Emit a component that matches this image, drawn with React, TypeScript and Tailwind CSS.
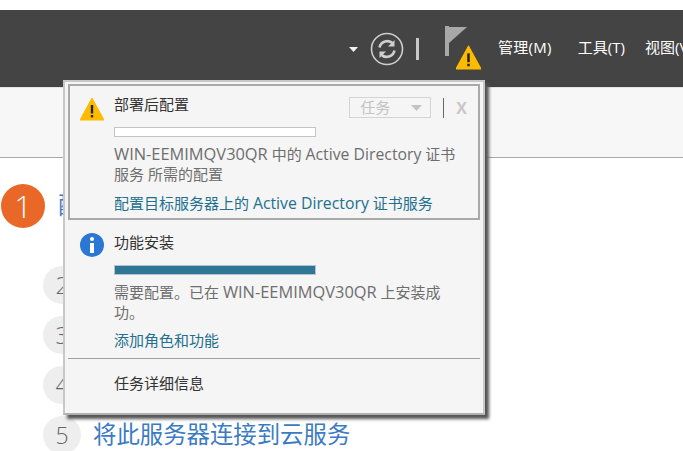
const cjk = "font-['Open_Sans','Noto_Sans_CJK_SC',sans-serif]";

const En = ({ children }: { children: string }) => <span className="text-[15.8px]">{children}</span>;
const Host = () => <span className="text-[16.4px]">WIN-EEMIMQV30QR</span>;

const WarnIcon = ({ size }: { size: number }) => (
  <svg width={size} height={size} viewBox="0 0 24 24">
    <path d="M12 1 L24 23 H0 Z" fill="#fdbb00" stroke="#fdbb00" strokeLinejoin="round" />
    <rect x="10.8" y="8" width="2.4" height="8.5" fill="#222" />
    <rect x="10.8" y="18" width="2.4" height="2.4" fill="#222" />
  </svg>
);

const Step = ({ n, text }: { n: number; text?: string }) => (
  <div className="flex items-center h-[50px]">
    <div className="w-[38px] h-[38px] rounded-full bg-[#eeeeee] flex items-center justify-center text-[23px] leading-none text-[#666] font-light shrink-0">
      {n}
    </div>
    {text && <div className="ml-[12px] text-[23.4px] leading-none text-[#3b7bc4] whitespace-nowrap">{text}</div>}
  </div>
);

const Panel = () => (
  <div className="absolute left-[63px] top-[80px] w-[422px] h-[335px] bg-[#f5f5f5] border-2 border-[#c8c8c8] border-b-[#b0b0b0] shadow-[4px_4px_3px_#555] px-[3px] pt-[2px]">
    <div className="border-2 border-[#a9a9a9] h-[136px] pl-[44px] pr-[12px] relative">
      <div className="absolute left-[10px] top-[11px]">
        <WarnIcon size={24} />
      </div>
      <div className="flex items-center justify-between h-[36px]">
        <span className="text-[15px] text-[#333]">部署后配置</span>
        <div className="flex items-center mt-[7px] mr-[-1px]">
          <div className="w-[82px] h-[21px] border border-[#d4d4d4] flex items-center pl-[10px] text-[15px] text-[#c4c4c4]">
            任务
            <svg className="ml-[21px]" width="11" height="6" viewBox="0 0 11 6">
              <path d="M0 0 H11 L5.5 6 Z" fill="#c4c4c4" />
            </svg>
          </div>
          <div className="w-[1px] h-[20px] bg-[#666] ml-[12px]" />
          <span className="ml-[12px] text-[16px] font-bold text-[#c8c8c8] leading-none">X</span>
        </div>
      </div>
      <div className="w-[202px] h-[10px] bg-white border border-[#c4c4c4] mt-[5px]" />
      <p className="text-[15px] text-[#6e6e6e] leading-[20px] mt-[7px] w-[345px]">
        <Host /> 中的 <En>Active Directory</En> 证书
        <br />
        服务 所需的配置
      </p>
      <div className="text-[15px] text-[#22708f] leading-[20px] mt-[9px] whitespace-nowrap">
        配置目标服务器上的 <En>Active Directory</En> 证书服务
      </div>
    </div>
    <div className="pl-[46px] relative h-[138px]">
      <div className="absolute left-[12px] top-[13px] w-[24px] h-[24px] rounded-full bg-[#2b78d4] flex flex-col items-center justify-center gap-[2px]">
        <div className="w-[4px] h-[4px] bg-white rounded-full" />
        <div className="w-[4px] h-[10px] bg-white" />
      </div>
      <div className="text-[15px] text-[#333] pt-[12px] leading-[20px]">功能安装</div>
      <div className="w-[202px] h-[10px] bg-[#2e7695] border border-[#b4c4cc] mt-[13px]" />
      <p className="text-[15px] text-[#6e6e6e] leading-[20px] mt-[7px] w-[345px]">
        需要配置。已在 <Host /> 上安装成
        <br />
        功。
      </p>
      <div className="text-[15px] text-[#22708f] leading-[20px] mt-[8px]">添加角色和功能</div>
    </div>
    <div className="border-t border-[#a0a0a0] pl-[46px] pt-[14px] text-[15px] text-[#333] leading-[20px]">
      任务详细信息
    </div>
  </div>
);

export default function App() {
  return (
    <div className={`relative w-[683px] h-[451px] overflow-hidden bg-white ${cjk}`}>
      <div className="h-[10px]" />
      <div className="h-[77px] bg-[#444444] flex items-center pl-[349px] text-white whitespace-nowrap">
        <svg width="9" height="5" viewBox="0 0 9 5" className="mt-[2px] shrink-0">
          <path d="M0 0 H9 L4.5 5 Z" fill="#f0f0f0" />
        </svg>
        <svg width="34" height="34" viewBox="0 0 34 34" className="ml-[12px] mt-[1px] shrink-0" fill="none" stroke="#cfcfcf">
          <circle cx="17" cy="17" r="15.5" strokeWidth="1.6" />
          <path d="M9.5 15.5 A8 8 0 0 1 23 11.5" strokeWidth="2.6" />
          <path d="M24.5 18.5 A8 8 0 0 1 11 22.5" strokeWidth="2.6" />
          <path d="M24.5 8 V14.5 H18 Z" fill="#cfcfcf" stroke="none" />
          <path d="M9.5 26 V19.5 H16 Z" fill="#cfcfcf" stroke="none" />
        </svg>
        <div className="w-[3px] h-[22px] bg-[#c8c8c8] ml-[12px] mt-[1px] shrink-0" />
        <div className="relative w-[37px] h-[46px] ml-[26px] mt-[5px] shrink-0">
          <svg width="24" height="32" viewBox="0 0 24 32" className="absolute left-0 top-[-2px]">
            <rect x="0" y="0" width="4" height="30" fill="#a8a8a8" />
            <path d="M4 1 H22 L4 17 Z" fill="#a8a8a8" />
          </svg>
          <div className="absolute left-[11px] top-[17px]">
            <WarnIcon size={25} />
          </div>
        </div>
        <span className="ml-[16px] mt-[-2px] text-[15px] tracking-[0.3px] shrink-0">管理(M)</span>
        <span className="ml-[26px] mt-[-2px] text-[15px] shrink-0">工具(T)</span>
        <span className="ml-[20px] mt-[-2px] text-[15px] shrink-0">视图(V)</span>
      </div>
      <div className="h-[71px] bg-[#f7f7f7] border-t border-[#e4e4e4] border-b border-b-[#a8a8a8]" />
      <div className="flex items-center pl-[1px] mt-[26px] h-[44px]">
        <div className="w-[44px] h-[44px] rounded-full bg-[#e96828] flex items-center justify-center text-white text-[31px] font-light">
          1
        </div>
        <span className="ml-[13px] text-[23.4px] text-[#3b7bc4] whitespace-nowrap">配</span>
      </div>
      <div className="pl-[43px] mt-[32px] flex flex-col">
        <Step n={2} />
        <Step n={3} />
        <Step n={4} />
        <Step n={5} text="将此服务器连接到云服务" />
      </div>
      <Panel />
    </div>
  );
}
